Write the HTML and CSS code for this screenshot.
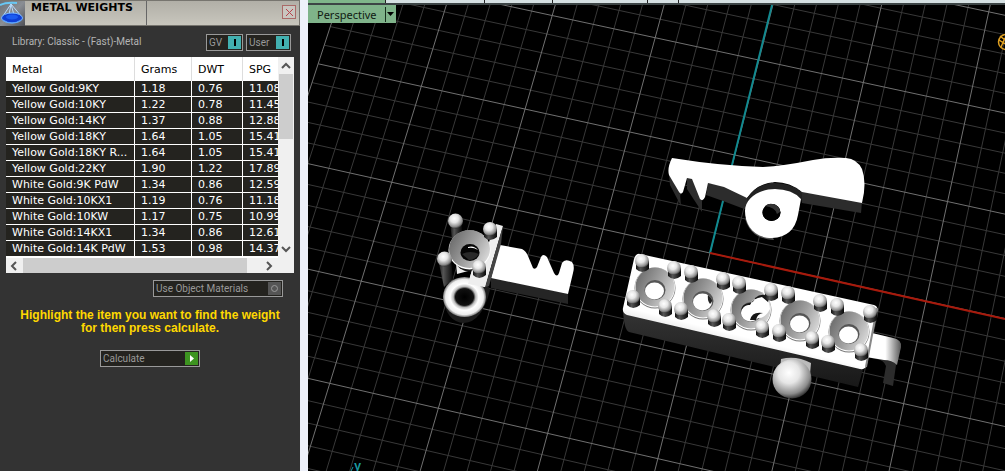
FILE: index.html
```html
<!DOCTYPE html>
<html lang="en">
<head>
<meta charset="utf-8">
<title>Metal Weights</title>
<link rel="stylesheet" href="styles.css">
</head>
<body>
<main class="app">
  <aside class="panel">
    <header class="titlebar">
      <svg class="logo" width="25" height="25" viewBox="0 0 25 25" aria-hidden="true">
        <defs><linearGradient id="logoBg" x2="1" y2="1"><stop offset="0" stop-color="#6c7076"/><stop offset=".5" stop-color="#8a8e94"/><stop offset="1" stop-color="#4d4f55"/></linearGradient></defs>
        <rect width="25" height="25" fill="url(#logoBg)"/>
        <path d="M3 15L11 3L21 15M11 3L9 14M11 3L14 14" stroke="#b8dcff" stroke-width="1" fill="none"/>
        <path d="M0 4Q6 1 17 2" stroke="#68c8f4" stroke-width="2" fill="none"/>
        <ellipse cx="12" cy="17" rx="10.500" ry="5" fill="#0f3fd4" stroke="#7ab8ff"/>
        <ellipse cx="12" cy="16" rx="6" ry="2.500" fill="#1d5cf0"/>
        <path d="M3 19Q12 25 21 19" stroke="#55a0ff" fill="none"/>
      </svg>
      <h1 class="title">METAL WEIGHTS</h1>
      <button class="close" type="button" aria-label="Close">
        <svg width="9" height="9" viewBox="0 0 9 9"><path d="M1 1L8 8M8 1L1 8" stroke="#b8414b" fill="none"/></svg>
      </button>
    </header>
    <div class="library">
      <p class="library-name">Library: Classic - (Fast)-Metal</p>
      <button class="field gv" type="button"><span>GV</span><i class="on"></i></button>
      <button class="field user" type="button"><span>User</span><i class="on"></i></button>
    </div>
    <div class="list">
      <div class="table-clip">
        <table class="metals">
          <thead><tr><th class="c-metal">Metal</th><th class="c-grams">Grams</th><th class="c-dwt">DWT</th><th class="c-spg">SPG</th></tr></thead>
          <tbody>
            <tr><td>Yellow Gold:9KY</td><td>1.18</td><td>0.76</td><td>11.08</td></tr>
            <tr><td>Yellow Gold:10KY</td><td>1.22</td><td>0.78</td><td>11.45</td></tr>
            <tr><td>Yellow Gold:14KY</td><td>1.37</td><td>0.88</td><td>12.88</td></tr>
            <tr><td>Yellow Gold:18KY</td><td>1.64</td><td>1.05</td><td>15.41</td></tr>
            <tr><td>Yellow Gold:18KY R...</td><td>1.64</td><td>1.05</td><td>15.41</td></tr>
            <tr><td>Yellow Gold:22KY</td><td>1.90</td><td>1.22</td><td>17.89</td></tr>
            <tr><td>White Gold:9K PdW</td><td>1.34</td><td>0.86</td><td>12.59</td></tr>
            <tr><td>White Gold:10KX1</td><td>1.19</td><td>0.76</td><td>11.18</td></tr>
            <tr><td>White Gold:10KW</td><td>1.17</td><td>0.75</td><td>10.99</td></tr>
            <tr><td>White Gold:14KX1</td><td>1.34</td><td>0.86</td><td>12.61</td></tr>
            <tr><td>White Gold:14K PdW</td><td>1.53</td><td>0.98</td><td>14.37</td></tr>
          </tbody>
        </table>
      </div>
      <div class="vbar">
        <svg width="16" height="17" viewBox="0 0 16 17"><path d="M4 11L8 7L12 11" class="arrow"/></svg>
        <span class="vthumb"></span>
        <svg class="push" width="16" height="17" viewBox="0 0 16 17"><path d="M4 6L8 10L12 6" class="arrow"/></svg>
      </div>
      <div class="hbar">
        <svg width="17" height="15" viewBox="0 0 17 15"><path d="M10 4L6 8L10 12" class="arrow"/></svg>
        <span class="hthumb"></span>
        <svg class="push" width="17" height="15" viewBox="0 0 17 15"><path d="M6 4L10 8L6 12" class="arrow"/></svg>
      </div>
    </div>
    <div class="materials">
      <button class="field" type="button"><span>Use Object Materials</span>
        <svg width="13" height="13" viewBox="0 0 13 13"><rect width="13" height="13" fill="#555"/><circle cx="6.500" cy="6.500" r="3" fill="none" stroke="#999"/></svg></button>
    </div>
    <p class="hint">Highlight the item you want to find the weight for then press calculate.</p>
    <div class="action">
      <button class="field" type="button"><span>Calculate</span>
        <svg width="13" height="13" viewBox="0 0 13 13"><rect width="13" height="13" fill="#3d9420"/><path d="M5 3L9 6.500L5 10Z" fill="#fff"/></svg></button>
    </div>
  </aside>

  <section class="view">
    <div class="tabs"><span class="tab active"></span><span class="tab t2"></span><span class="tab t3"></span><span class="tab t4"></span><span class="tab t5"></span></div>
    <div class="canvas">
      <svg class="scene" viewBox="308 5 697 466" preserveAspectRatio="xMinYMin slice" role="img" aria-label="Perspective view of jewellery parts">
        <defs>
          <radialGradient id="ball" cx=".42" cy=".34" r=".68"><stop offset="0" stop-color="#fff"/><stop offset=".4" stop-color="#e6e6e6"/><stop offset=".8" stop-color="#8c8c8c"/><stop offset="1" stop-color="#2a2a2a"/></radialGradient>
          <linearGradient id="post"><stop offset="0" stop-color="#111"/><stop offset=".35" stop-color="#555"/><stop offset="1" stop-color="#080808"/></linearGradient>
          <linearGradient id="cup" x1="0" y1=".3" x2="1" y2=".8"><stop offset="0" stop-color="#6c6c6c"/><stop offset=".5" stop-color="#a0a0a0"/><stop offset="1" stop-color="#e0e0e0"/></linearGradient>
          <linearGradient id="top" gradientUnits="userSpaceOnUse" x1="750" y1="338" x2="746" y2="354"><stop offset="0" stop-color="#fff"/><stop offset=".5" stop-color="#eee"/><stop offset="1" stop-color="#444"/></linearGradient>
          <linearGradient id="side" x2="0" y2="1"><stop offset="0" stop-color="#343434"/><stop offset="1" stop-color="#181818"/></linearGradient>
          <linearGradient id="hook"><stop offset="0" stop-color="#fff"/><stop offset=".55" stop-color="#fff"/><stop offset="1" stop-color="#555"/></linearGradient>
          <radialGradient id="torus"><stop offset="0" stop-color="#000"/><stop offset=".42" stop-color="#111"/><stop offset=".52" stop-color="#bbb"/><stop offset=".66" stop-color="#fff"/><stop offset=".88" stop-color="#eee"/><stop offset="1" stop-color="#777"/></radialGradient>
          <g id="prong"><path d="M-6 0V8Q0 14 7 8V0Z" fill="url(#post)"/><circle r="7" fill="url(#ball)"/></g>
          <g id="seat"><circle r="20.500" cy="1" fill="#777"/><circle r="20" cy=".5" fill="#fff"/><circle r="19.500" fill="url(#cup)"/><ellipse cy="3" rx="10.500" ry="10" fill="#555"/><ellipse cx="-.5" cy="4" rx="9.500" ry="8.500" fill="#fff"/></g>
        </defs>
        <rect x="308" y="5" width="697" height="466" fill="#000"/>
        <path id="minor" class="minor"/>
        <path id="major" class="major"/>
        <path d="M710 253L772 5" stroke="#108a90" stroke-width="2"/>
        <path d="M710 253L1005 319" stroke="#a81a0c" stroke-width="2"/>

        <g class="jaw">
          <path d="M669 174L680 194L681 206L670 185ZM687 178L692 178L702 201L702 212L687 189ZM708 183L724 186L747 198L747 210L723 201L706 195ZM800 191L862 202L861 213L802 203Z" fill="#2c2c2c"/>
          <path d="M672 158Q722 166 763 167Q783 166 813 160Q829 157 846 158Q857 159 862 169Q867 183 862 203L802 192Q790 182 775 182Q757 183 747 198L724 187L708 183L705 197Q703 202 700 199L692 179L687 178L683 192Q681 195 679 192L669 175Q667 168 672 158Z" fill="#fff"/>
          <path d="M747 198Q758 183 775 183Q792 183 802 193V199Q789 188 775 189Q756 191 747 208Z" fill="#222"/>
          <path d="M745 218Q750 239 774 240L770 232Z" fill="#555"/>
          <path fill-rule="evenodd" d="M775 189Q792 189 801 199L798 215Q794 237 772 238C754 238 745 225 745 211C745 199 758 189 775 189ZM780.500 212.500A9 8.500 0 1 0 762.500 212.500A9 8.500 0 1 0 780.500 212.500Z" fill="#fff"/>
          <ellipse cx="771.500" cy="212.500" rx="9" ry="8.500" fill="#000"/>
          <path d="M765 206A9 8.500 0 0 1 780 212L777 214Q775 207 765 206Z" fill="#333"/>
        </g>

        <g class="left-part">
          <path d="M491 277L568 294V304L491 288Z" fill="#252525"/>
          <path d="M500 245L522 249Q526 251 528 256L533 268Q535 270 537 267L541 257Q543 253 547 257L554 273Q557 278 559 273L562 263Q565 258 572 262Q575 266 573 273L568 294L491 278Z" fill="#fff"/>
          <path d="M443 297Q446 322 464 323Q482 322 490 290L485 280H450Z" fill="#1c1c1c"/>
          <path d="M450 222L452 240L462 237L462 222Z" fill="url(#post)"/>
          <path d="M496 224L503 226L485 287L468 284L472 270L457 274L456 262L484 255Z" fill="#eee"/>
          <path d="M485 287L503 226L501 244L489 286Z" fill="#444"/>
          <path d="M453 258Q460 276 478 270L485 255Z" fill="#181818"/>
          <ellipse cx="469.500" cy="250" rx="21" ry="19.500" fill="#fff"/>
          <ellipse cx="469.500" cy="249" rx="20.500" ry="19" fill="url(#cup)"/>
          <ellipse cx="470" cy="252.500" rx="9.500" ry="8.500" fill="#050505"/>
          <path d="M468 247Q474 245 478 250Q473 247 468 248Z" fill="#fff"/><path d="M462 254Q470 250 479 254Q475 260 469 260Z" fill="#282828"/>
          <path d="M438 259L444 287L453 279L451 259Z" fill="url(#post)"/>
          <ellipse cx="464.500" cy="297" rx="21.500" ry="20" fill="url(#torus)"/>
          <path d="M472 270L484 276L495 250L485 287L468 284Z" fill="#eee"/>
          <circle cx="455.500" cy="221" r="7.500" fill="url(#ball)"/>
          <circle cx="444.500" cy="259" r="7.500" fill="url(#ball)"/>
          <use href="#prong" x="490" y="229"/><use href="#prong" x="479" y="267"/>
        </g>

        <g class="bar">
          <path d="M872 333L893 338Q902 340 901 347L896 365L893 386L883 383L886 366Q884 360 876 359L866 357Z" fill="#2c2c2c"/>
          <path d="M872 333L893 338Q902 340 901 347L897 365Q892 360 884 360L866 357Z" fill="url(#hook)"/>
          <path d="M623 310L864 366L858 387L629 332Q624 330 623 310Z" fill="url(#side)"/>
          <path d="M640 254L874 305Q879 307 877 312L867 364Q866 370 860 369L627 315Q622 313 623 308L634 259Q636 253 640 254Z" fill="url(#top)"/>
          <path d="M877 308L866 367" stroke="#888" stroke-width="2"/>
          <use href="#seat" x="655" y="287"/><use href="#seat" x="703" y="298"/><use href="#seat" x="751" y="309"/><use href="#seat" x="800" y="320"/><use href="#seat" x="849" y="331"/>
          <path d="M750 304Q754 297 762 297Q770 300 770 309Q765 319 757 318Q748 314 750 304Z" fill="#fff"/>
          <path d="M741 312Q743 304 750 305Q753 298 762 297L768 302L769 297Q762 292 755 298Q754 303 749 303Q741 304 741 312ZM750 320Q752 311 763 313Q757 314 756 320Z" fill="#161616"/>
          <path d="M708 295Q715 300 710 304Q707 300 708 295Z" fill="#222"/>
          <use href="#prong" x="642" y="261"/><use href="#prong" x="674" y="268"/><use href="#prong" x="691" y="272"/><use href="#prong" x="723" y="279"/><use href="#prong" x="739" y="283"/><use href="#prong" x="771" y="290"/><use href="#prong" x="788" y="293"/><use href="#prong" x="820" y="301"/><use href="#prong" x="837" y="305"/><use href="#prong" x="870" y="312"/>
          <use href="#prong" x="633" y="297"/><use href="#prong" x="665" y="306"/><use href="#prong" x="681" y="309"/><use href="#prong" x="714" y="316"/><use href="#prong" x="729" y="320"/><use href="#prong" x="762" y="327"/><use href="#prong" x="779" y="331"/><use href="#prong" x="812" y="338"/><use href="#prong" x="828" y="342"/><use href="#prong" x="861" y="350"/>
          <path d="M781 359Q796 355 811 363L810 374L780 371Z" fill="#bbb"/>
          <circle cx="792" cy="379" r="19.500" fill="url(#ball)"/>
        </g>

        <g fill="none" stroke="#e0a020" stroke-width="1.500"><circle cx="1006" cy="42" r="7.500"/><path d="M999 40L1005 44M1001 47L1005 38M1000 36L1005 40"/></g>
        <path d="M351 471L353 467" stroke="#1a9aa0"/>
        <text x="354" y="470" class="axis-name">y</text>
      </svg>
      <button class="view-name" type="button"><span>Perspective</span><svg width="10" height="15" viewBox="0 0 10 15"><path d="M.5 0V15" stroke="#16301d"/><path d="M2 5H9L5.500 9Z" fill="#000"/></svg></button>
    </div>
  </section>
</main>
<script src="grid.js"></script>
</body>
</html>
```
FILE: styles.css
```css
* { box-sizing: border-box; }
body { margin: 0; background: #333; font-family: "DejaVu Sans", sans-serif; font-size: 11px; }
p, h1 { margin: 0; }
button { margin: 0; padding: 0; border: 0; font: inherit; }
svg { display: block; flex: none; }
.app { display: flex; height: 100vh; overflow: hidden; }

.panel { flex: none; width: 300px; background: #333; display: flex; flex-direction: column; }
.titlebar { display: flex; height: 26px; background: linear-gradient(#b1afa7, #c8c6bd); border-top: 1px solid #77756f; border-bottom: 1px solid #77756f; border-right: 1px solid #77756f; }
.title { width: 122px; padding-left: 6px; font-size: 11px; line-height: 13px; color: #000; border-right: 1px solid #666; }
.close { width: 14px; height: 14px; margin: 4px 3px 0 auto; display: grid; place-items: center; background: #c9c6c0; border: 1px solid #aa6a68; }

.library { display: flex; align-items: flex-start; gap: 3px; padding: 8px 9px 0 12px; height: 31px; }
.library-name { flex: 1; font: 10px/16px Roboto, sans-serif; color: #b4b4b4; white-space: nowrap; }
.field { display: flex; align-items: center; justify-content: space-between; height: 17px; padding: 0 1px 0 2px; border: 1px solid #999; background: #24231f; color: #999; font: 10px/15px Roboto, sans-serif; white-space: nowrap; }
.gv { width: 37px; }
.user { width: 45px; }
.on { width: 13px; height: 13px; background: #42b0b0; display: grid; place-items: center; }
.on::after { content: ""; width: 2px; height: 7px; background: #000; }

.list { margin: 0 6px; display: grid; grid-template-columns: 1fr 16px; background: #f0f0f0; }
.table-clip { overflow: hidden; background: #fff; padding-bottom: 1px; }
.metals { table-layout: fixed; width: 280px; border-collapse: separate; border-spacing: 0; color: #fff; }
.metals th, .metals td { padding: 0 0 0 6px; text-align: left; white-space: nowrap; }
.metals th { height: 24px; font-weight: normal; color: #000; background: #fff; border-right: 1px solid #ddd; }
.metals td { height: 16px; padding-top: 1px; line-height: 14px; background: #24231f; border-right: 1px solid #fff; border-bottom: 1px solid #fff; }
.c-metal { width: 129px; }
.c-grams { width: 57px; }
.c-dwt { width: 51px; }
.vbar { display: flex; flex-direction: column; }
.vthumb { width: 14px; height: 65px; margin-left: 1px; background: #cdcdcd; }
.hbar { grid-column: 1; display: flex; height: 15px; align-items: center; }
.hthumb { width: 224px; height: 15px; background: #cdcdcd; }
.push { margin-top: auto; }
.hbar .push { margin: 0 0 0 auto; }
.arrow { fill: none; stroke: #555; stroke-width: 2; }

.materials { padding: 7px 17px 0 153px; }
.materials .field { width: 100%; }
.hint { padding: 12px 16px 0; font: bold 12px/13px "Liberation Sans", sans-serif; color: #ffd800; text-align: center; }
.action { padding: 15px 100px 0; }
.action .field { width: 100%; }

.view { flex: 1; min-width: 0; display: flex; flex-direction: column; border-left: 8px solid #eef1fa; }
.tabs { display: flex; height: 3px; background: #d5e0e2; }
.tab { border-right: 1px solid #222; }
.active { width: 78px; background: #7fb58a; }
.t2 { width: 99px; }
.t3 { width: 68px; }
.t4 { width: 95px; }
.t5 { width: 31px; }
.canvas { flex: 1; min-height: 0; display: grid; background: #000; border-top: 2px solid #3c4445; overflow: hidden; }
.scene { grid-area: 1 / 1; width: 100%; height: 100%; }
.view-name { grid-area: 1 / 1; place-self: start; z-index: 1; display: flex; align-items: center; gap: 8px; height: 18px; padding: 0 1px 0 9px; background: #7fb38a; color: #101a12; font: 11px/17px "Noto Sans", sans-serif; }
.minor { fill: none; stroke: #383838; }
.major { fill: none; stroke: #707070; }
.axis-name { font: bold 12px "Liberation Mono", monospace; fill: #1a9aa0; }
```
FILE: grid.js
```js
// Ground plane in perspective: one unit is one major square, five minor steps each.
function project(u, v) {
  const w = 1 - 0.00356 * u + 0.016 * v;
  return ((710 + 104.7 * u + 36.6 * v) / w).toFixed(1) + " " +
         ((253 + 22.93 * u - 95.5 * v) / w).toFixed(1);
}
const lines = { minor: "", major: "" };
for (let i = -20; i <= 20; i++) {
  const kind = i % 5 === 0 ? "major" : "minor";
  const k = i / 5;
  lines[kind] += `M${project(k, -4)}L${project(k, 4)}`;
  lines[kind] += `M${project(-4, k)}L${project(4, k)}`;
}
for (const kind in lines) document.getElementById(kind).setAttribute("d", lines[kind]);
```
